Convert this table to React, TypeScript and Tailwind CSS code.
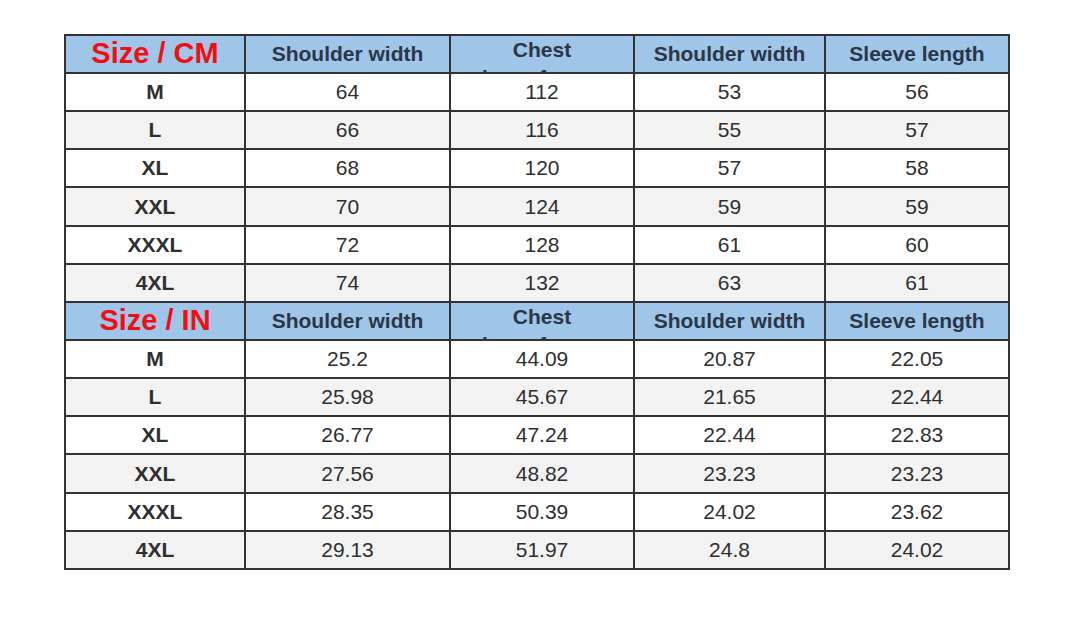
import React from "react";

const cols = ["w-[180px]", "w-[205px]", "w-[184px]", "w-[191px]", "w-[184px]"];

const cmRows = [
  ["M", "64", "112", "53", "56"],
  ["L", "66", "116", "55", "57"],
  ["XL", "68", "120", "57", "58"],
  ["XXL", "70", "124", "59", "59"],
  ["XXXL", "72", "128", "61", "60"],
  ["4XL", "74", "132", "63", "61"],
];

const inRows = [
  ["M", "25.2", "44.09", "20.87", "22.05"],
  ["L", "25.98", "45.67", "21.65", "22.44"],
  ["XL", "26.77", "47.24", "22.44", "22.83"],
  ["XXL", "27.56", "48.82", "23.23", "23.23"],
  ["XXXL", "28.35", "50.39", "24.02", "23.62"],
  ["4XL", "29.13", "51.97", "24.8", "24.02"],
];

function Header({ label }: { label: string }) {
  return (
    <div className="flex h-[38px] bg-[#9fc5e8]">
      <div className={`${cols[0]} flex items-center justify-center border-r-2 border-b-2 border-[#333] text-[29px] font-bold text-[#f20f12]`}>
        {label}
      </div>
      <div className={`${cols[1]} flex items-center justify-center border-r-2 border-b-2 border-[#333] text-[21px] font-bold text-[#2b3646]`}>
        Shoulder width
      </div>
      <div className={`${cols[2]} border-r-2 border-b-2 border-[#333] overflow-hidden text-center text-[21px] font-bold leading-[28px] text-[#2b3646]`}>
        <div>Chest</div>
        <div>circumference</div>
      </div>
      <div className={`${cols[3]} flex items-center justify-center border-r-2 border-b-2 border-[#333] text-[21px] font-bold text-[#2b3646]`}>
        Shoulder width
      </div>
      <div className={`${cols[4]} flex items-center justify-center border-r-2 border-b-2 border-[#333] text-[21px] font-bold text-[#2b3646]`}>
        Sleeve length
      </div>
    </div>
  );
}

function Row({ cells, idx }: { cells: string[]; idx: number }) {
  const bg = idx % 2 === 0 ? "bg-white" : "bg-[#f3f3f3]";
  const h = idx === 3 ? "h-[39px]" : "h-[38px]";
  return (
    <div className={`flex ${h} ${bg}`}>
      {cells.map((c, i) => (
        <div
          key={i}
          className={`${cols[i]} flex items-center justify-center border-r-2 border-b-2 border-[#333] text-[21px] text-[#2f2f2f] ${i === 0 ? "font-bold" : ""}`}
        >
          {c}
        </div>
      ))}
    </div>
  );
}

export default function App() {
  return (
    <div className="w-[1080px] h-[621px] bg-white" style={{ fontFamily: '"Liberation Sans", Arial, sans-serif' }}>
      <div className="pt-[34px] pl-[64px]">
        <div className="w-[946px] border-l-2 border-t-2 border-[#333]">
          <Header label="Size / CM" />
          {cmRows.map((r, i) => (
            <Row key={"c" + i} cells={r} idx={i} />
          ))}
          <Header label="Size / IN" />
          {inRows.map((r, i) => (
            <Row key={"i" + i} cells={r} idx={i} />
          ))}
        </div>
      </div>
    </div>
  );
}
